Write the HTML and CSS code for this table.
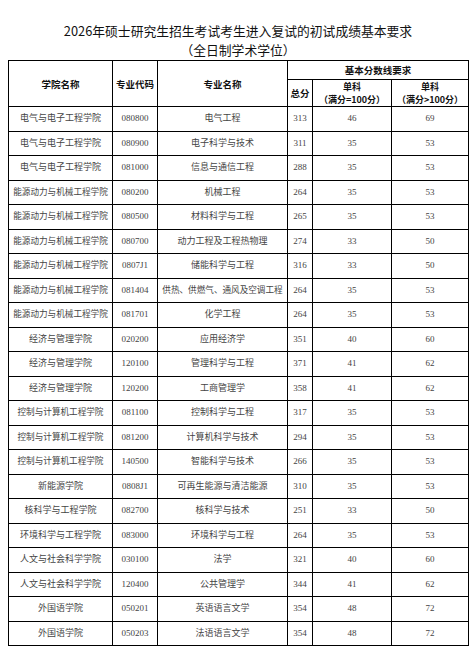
FILE: index.html
```html
<!DOCTYPE html>
<html lang="zh-CN">
<head>
<meta charset="utf-8">
<title>2026年硕士研究生招生考试考生进入复试的初试成绩基本要求</title>
<link rel="stylesheet" href="styles.css">
</head>
<body>
<div class="title">
  <div>2026年硕士研究生招生考试考生进入复试的初试成绩基本要求</div>
  <div>（全日制学术学位）</div>
</div>
<table class="score">
  <colgroup>
    <col class="c1"><col class="c2"><col class="c3"><col class="c4"><col class="c5"><col class="c6">
  </colgroup>
  <thead>
    <tr class="h1">
      <th rowspan="2">学院名称</th>
      <th rowspan="2">专业代码</th>
      <th rowspan="2">专业名称</th>
      <th colspan="3">基本分数线要求</th>
    </tr>
    <tr class="h2">
      <th>总分</th>
      <th class="two">单科<br>（满分=100分）</th>
      <th class="two">单科<br>（满分&gt;100分）</th>
    </tr>
  </thead>
  <tbody>
    <tr><td>电气与电子工程学院</td><td>080800</td><td>电气工程</td><td>313</td><td>46</td><td>69</td></tr>
    <tr><td>电气与电子工程学院</td><td>080900</td><td>电子科学与技术</td><td>311</td><td>35</td><td>53</td></tr>
    <tr><td>电气与电子工程学院</td><td>081000</td><td>信息与通信工程</td><td>288</td><td>35</td><td>53</td></tr>
    <tr><td class="sm">能源动力与机械工程学院</td><td>080200</td><td>机械工程</td><td>264</td><td>35</td><td>53</td></tr>
    <tr><td class="sm">能源动力与机械工程学院</td><td>080500</td><td>材料科学与工程</td><td>265</td><td>35</td><td>53</td></tr>
    <tr><td class="sm">能源动力与机械工程学院</td><td>080700</td><td>动力工程及工程热物理</td><td>274</td><td>33</td><td>50</td></tr>
    <tr><td class="sm">能源动力与机械工程学院</td><td>0807J1</td><td>储能科学与工程</td><td>316</td><td>33</td><td>50</td></tr>
    <tr><td class="sm">能源动力与机械工程学院</td><td>081404</td><td class="sm">供热、供燃气、通风及空调工程</td><td>264</td><td>35</td><td>53</td></tr>
    <tr><td class="sm">能源动力与机械工程学院</td><td>081701</td><td>化学工程</td><td>264</td><td>35</td><td>53</td></tr>
    <tr><td>经济与管理学院</td><td>020200</td><td>应用经济学</td><td>351</td><td>40</td><td>60</td></tr>
    <tr><td>经济与管理学院</td><td>120100</td><td>管理科学与工程</td><td>371</td><td>41</td><td>62</td></tr>
    <tr><td>经济与管理学院</td><td>120200</td><td>工商管理学</td><td>358</td><td>41</td><td>62</td></tr>
    <tr><td class="sm">控制与计算机工程学院</td><td>081100</td><td>控制科学与工程</td><td>317</td><td>35</td><td>53</td></tr>
    <tr><td class="sm">控制与计算机工程学院</td><td>081200</td><td>计算机科学与技术</td><td>294</td><td>35</td><td>53</td></tr>
    <tr><td class="sm">控制与计算机工程学院</td><td>140500</td><td>智能科学与技术</td><td>266</td><td>35</td><td>53</td></tr>
    <tr><td>新能源学院</td><td>0808J1</td><td>可再生能源与清洁能源</td><td>310</td><td>35</td><td>53</td></tr>
    <tr><td>核科学与工程学院</td><td>082700</td><td>核科学与技术</td><td>251</td><td>33</td><td>50</td></tr>
    <tr><td>环境科学与工程学院</td><td>083000</td><td>环境科学与工程</td><td>264</td><td>35</td><td>53</td></tr>
    <tr><td>人文与社会科学学院</td><td>030100</td><td>法学</td><td>321</td><td>40</td><td>60</td></tr>
    <tr><td>人文与社会科学学院</td><td>120400</td><td>公共管理学</td><td>344</td><td>41</td><td>62</td></tr>
    <tr><td>外国语学院</td><td>050201</td><td>英语语言文学</td><td>354</td><td>48</td><td>72</td></tr>
    <tr><td>外国语学院</td><td>050203</td><td>法语语言文学</td><td>354</td><td>48</td><td>72</td></tr>
  </tbody>
</table>
</body>
</html>
```
FILE: styles.css
```css
html, body {
  margin: 0;
  padding: 0;
  background: #fff;
}
body {
  padding: 22px 7px 0 8px;
  font-family: "Liberation Serif", "Noto Sans CJK SC", serif;
}
.title {
  font-family: "Noto Sans CJK SC", sans-serif;
  font-size: 12.8px;
  line-height: 18.5px;
  text-align: center;
  color: #111;
  margin-bottom: 1px;
}
.score {
  width: 460px;
  border-collapse: collapse;
  table-layout: fixed;
}
.c1 { width: 104px; }
.c2 { width: 45px; }
.c3 { width: 130px; }
.c4 { width: 25px; }
.c5 { width: 79px; }
.c6 { width: 77px; }
.score th,
.score td {
  border: 1px solid #000;
  padding: 0;
  text-align: center;
  vertical-align: middle;
  white-space: nowrap;
  overflow: hidden;
}
.score th {
  font-family: "Noto Sans CJK SC", sans-serif;
  font-weight: 700;
  font-size: 9.5px;
  line-height: 14px;
  color: #111;
}
.score th.two {
  font-size: 9px;
  line-height: 13px;
  vertical-align: top;
}
.h1 th { height: 18px; }
.h2 th { height: 26px; }
.score td {
  height: 23.5px;
  font-size: 9px;
  line-height: 13px;
  color: #444;
}
.score td.sm {
  font-size: 8.6px;
}
```
